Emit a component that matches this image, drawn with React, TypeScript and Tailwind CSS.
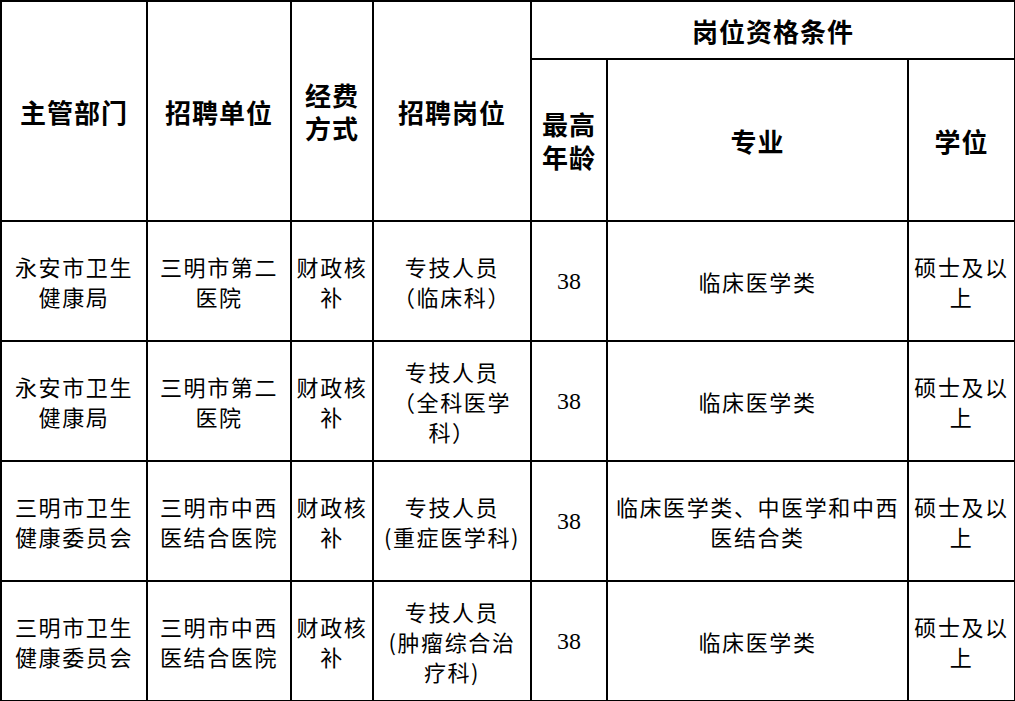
const ROWS = [
  {
    dept: ["永安市卫生", "健康局"],
    unit: ["三明市第二", "医院"],
    fund: ["财政核", "补"],
    post: ["专技人员", "（临床科）"],
    age: "38",
    major: ["临床医学类"],
    degree: ["硕士及以", "上"],
  },
  {
    dept: ["永安市卫生", "健康局"],
    unit: ["三明市第二", "医院"],
    fund: ["财政核", "补"],
    post: ["专技人员", "（全科医学", "科）"],
    age: "38",
    major: ["临床医学类"],
    degree: ["硕士及以", "上"],
  },
  {
    dept: ["三明市卫生", "健康委员会"],
    unit: ["三明市中西", "医结合医院"],
    fund: ["财政核", "补"],
    post: ["专技人员", "(重症医学科)"],
    age: "38",
    major: ["临床医学类、中医学和中西", "医结合类"],
    degree: ["硕士及以", "上"],
  },
  {
    dept: ["三明市卫生", "健康委员会"],
    unit: ["三明市中西", "医结合医院"],
    fund: ["财政核", "补"],
    post: ["专技人员", "(肿瘤综合治", "疗科)"],
    age: "38",
    major: ["临床医学类"],
    degree: ["硕士及以", "上"],
  },
];

function Lines({ lines }: { lines: string[] }) {
  return (
    <>
      {lines.map((l, i) => (
        <div key={i}>{l}</div>
      ))}
    </>
  );
}

const th =
  "border-2 border-black p-0 text-center align-middle font-bold text-[26px] leading-[33px] tracking-[1px]";
const td =
  "border-2 border-black p-0 text-center align-middle font-normal text-[22px] leading-[30px] tracking-[1.6px] [text-spacing-trim:space-all]";

export default function App() {
  return (
    <div className="bg-white w-[1015px] h-[701px] overflow-hidden font-['Noto_Sans_CJK_SC','Noto_Sans_CJK_JP',sans-serif] text-black">
      <table className="table-fixed border-collapse w-[1014px]">
        <colgroup>
          <col className="w-[146px]" />
          <col className="w-[144px]" />
          <col className="w-[82px]" />
          <col className="w-[158px]" />
          <col className="w-[76px]" />
          <col className="w-[301px]" />
          <col className="w-[107px]" />
        </colgroup>
        <thead>
          <tr className="h-[58px]">
            <th rowSpan={2} className={th}>主管部门</th>
            <th rowSpan={2} className={th}>招聘单位</th>
            <th rowSpan={2} className={th}>
              <Lines lines={["经费", "方式"]} />
            </th>
            <th rowSpan={2} className={th}>招聘岗位</th>
            <th colSpan={3} className={th}>岗位资格条件</th>
          </tr>
          <tr className="h-[162px]">
            <th className={th}>
              <Lines lines={["最高", "年龄"]} />
            </th>
            <th className={th}>专业</th>
            <th className={th}>学位</th>
          </tr>
        </thead>
        <tbody>
          {ROWS.map((r, i) => (
            <tr key={i} className="h-[120px]">
              <td className={td}>
                <Lines lines={r.dept} />
              </td>
              <td className={td}>
                <Lines lines={r.unit} />
              </td>
              <td className={td}>
                <Lines lines={r.fund} />
              </td>
              <td className={td}>
                <Lines lines={r.post} />
              </td>
              <td className={`${td} font-['Liberation_Serif',serif] text-[24px] tracking-normal`}>
                {r.age}
              </td>
              <td className={td}>
                <Lines lines={r.major} />
              </td>
              <td className={td}>
                <Lines lines={r.degree} />
              </td>
            </tr>
          ))}
        </tbody>
      </table>
    </div>
  );
}
